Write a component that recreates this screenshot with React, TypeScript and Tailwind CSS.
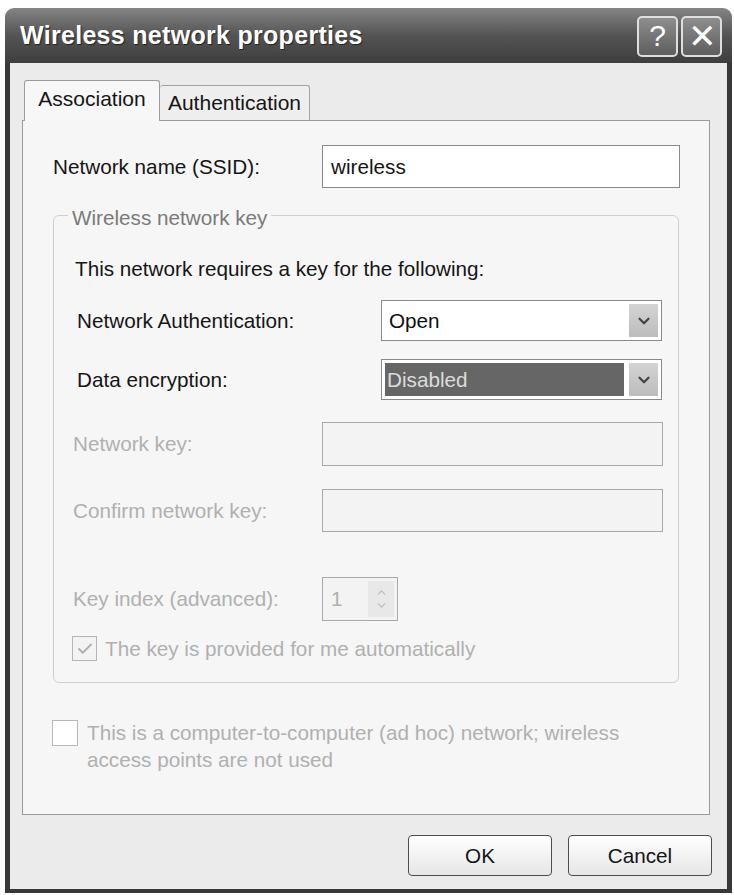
import { Check, ChevronDown, ChevronUp } from "lucide-react"

const font = { fontFamily: '"Liberation Sans", Arial, sans-serif' }

function TitleButton({ children }: { children: React.ReactNode }) {
  return (
    <div className="flex h-[41px] w-[41px] items-center justify-center rounded-[5px] border-2 border-[#dedede] bg-gradient-to-b from-[#8e8e8e] to-[#5e5e5e] text-[30px] leading-none text-white">
      {children}
    </div>
  )
}

function Select({
  value,
  highlighted,
}: {
  value: string
  highlighted?: boolean
}) {
  return (
    <div className="ml-auto mr-[16px] flex h-[41px] w-[281px] items-center border border-[#8a8a8a] bg-white p-[3px]">
      <div
        className={
          highlighted
            ? "flex h-full flex-1 items-center bg-[#666666] pl-[2px] text-[#dcdcdc]"
            : "flex h-full flex-1 items-center pl-[4px] text-[#111]"
        }
      >
        {value}
      </div>
      <div className="ml-[5px] flex h-full w-[29px] items-center justify-center bg-gradient-to-b from-[#d4d4d4] to-[#bcbcbc]">
        <ChevronDown className="size-[18px] text-[#444]" strokeWidth={3} />
      </div>
    </div>
  )
}

function DisabledInput({ className }: { className: string }) {
  return (
    <div
      className={`border border-[#a9a9a9] bg-[#f3f3f3] ${className}`}
    />
  )
}

export default function App() {
  return (
    <div className="h-[895px] w-[734px] bg-white pt-[8px] pl-[5px]" style={font}>
      <div className="flex h-[885px] w-[727px] flex-col overflow-hidden rounded-t-[9px]">
        {/* title bar */}
        <div className="flex h-[55px] shrink-0 items-center bg-gradient-to-b from-[#858585] via-[#545454] to-[#3e3e3e] pr-[10px] pl-[15px]">
          <span className="text-[25px] font-bold tracking-[0.3px] text-white [text-shadow:1px_1px_1px_#222]">
            Wireless network properties
          </span>
          <div className="ml-auto flex gap-[3px] pt-[1px]">
            <TitleButton>?</TitleButton>
            <TitleButton>
              <span className="text-[34px] font-light">✕</span>
            </TitleButton>
          </div>
        </div>

        {/* body */}
        <div className="flex flex-1 flex-col border-x-[5px] border-b-[4px] border-[#383838] bg-[#ebebeb] text-[20.7px] text-[#151515]">
          {/* tabs */}
          <div className="mt-[17px] ml-[14px] flex h-[40px] items-end">
            <div className="relative z-10 -mb-[1px] flex h-[41px] w-[136px] items-center justify-center rounded-t-[3px] border border-b-0 border-[#9c9c9c] bg-[#f7f7f7] pb-[4px] text-[21px]">
              Association
            </div>
            <div className="flex h-[35px] w-[150px] items-center justify-center rounded-t-[3px] border border-b-0 border-l-0 border-[#a3a3a3] bg-[#eeeeee] text-[21px]">
              Authentication
            </div>
          </div>

          {/* tab panel */}
          <div className="ml-[12px] flex h-[695px] w-[688px] flex-col border border-[#9c9c9c] bg-[#f6f6f6]">
            <div className="mt-[24px] flex h-[43px] items-center">
              <span className="ml-[30px]">Network name (SSID):</span>
              <div className="mr-[29px] ml-auto flex h-[43px] w-[358px] items-center border border-[#8a8a8a] bg-white pl-[8px]">
                wireless
              </div>
            </div>

            {/* group box */}
            <div className="relative mt-[27px] ml-[30px] flex h-[468px] w-[626px] flex-col rounded-[6px] border border-[#cfcfcf]">
              <span className="absolute -top-[14px] left-[14px] bg-[#f6f6f6] px-[4px] text-[#7a7a7a]">
                Wireless network key
              </span>

              <div className="mt-[38px] ml-[21px] flex h-[30px] items-center">
                This network requires a key for the following:
              </div>

              <div className="mt-[16px] flex h-[41px] items-center">
                <span className="ml-[23px]">Network Authentication:</span>
                <Select value="Open" />
              </div>

              <div className="mt-[18px] flex h-[41px] items-center">
                <span className="ml-[23px]">Data encryption:</span>
                <Select value="Disabled" highlighted />
              </div>

              <div className="mt-[22px] flex h-[44px] items-center text-[#b0b0b0]">
                <span className="ml-[19px]">Network key:</span>
                <DisabledInput className="mr-[15px] ml-auto h-[44px] w-[341px]" />
              </div>

              <div className="mt-[23px] flex h-[43px] items-center text-[#b0b0b0]">
                <span className="ml-[19px]">Confirm network key:</span>
                <DisabledInput className="mr-[15px] ml-auto h-[43px] w-[341px]" />
              </div>

              <div className="mt-[45px] flex h-[44px] items-center text-[#b0b0b0]">
                <span className="w-[268px] pl-[19px]">Key index (advanced):</span>
                <div className="flex h-[44px] w-[76px] items-center border border-[#a9a9a9] bg-[#f3f3f3] p-[3px] pl-[8px]">
                  <span className="flex-1">1</span>
                  <div className="flex h-full w-[26px] flex-col items-center justify-center bg-[#e8e8e8]">
                    <ChevronUp className="size-[13px] text-[#bdbdbd]" strokeWidth={2.5} />
                    <ChevronDown className="size-[13px] text-[#bdbdbd]" strokeWidth={2.5} />
                  </div>
                </div>
              </div>

              <div className="mt-[15px] flex h-[25px] items-center text-[#b0b0b0]">
                <div className="ml-[18px] flex size-[25px] items-center justify-center border border-[#b5b5b5] bg-[#f3f3f3]">
                  <Check className="size-[18px] text-[#b0b0b0]" strokeWidth={2.5} />
                </div>
                <span className="ml-[8px]">The key is provided for me automatically</span>
              </div>
            </div>

            {/* ad hoc */}
            <div className="mt-[36px] ml-[29px] flex items-start text-[#b0b0b0]">
              <div className="mt-[1px] size-[26px] shrink-0 border border-[#b8b8b8] bg-white" />
              <div className="ml-[9px] leading-[27px]">
                This is a computer-to-computer (ad hoc) network; wireless
                <br />
                access points are not used
              </div>
            </div>
          </div>

          {/* buttons */}
          <div className="mt-[20px] flex justify-end gap-[16px] pr-[15px]">
            <button className="h-[41px] w-[144px] rounded-[4px] border border-[#4d4d4d] bg-gradient-to-b from-white to-[#e6e6e6] text-[#151515]">
              OK
            </button>
            <button className="h-[41px] w-[144px] rounded-[4px] border border-[#4d4d4d] bg-gradient-to-b from-white to-[#e6e6e6] text-[#151515]">
              Cancel
            </button>
          </div>
        </div>
      </div>
    </div>
  )
}
